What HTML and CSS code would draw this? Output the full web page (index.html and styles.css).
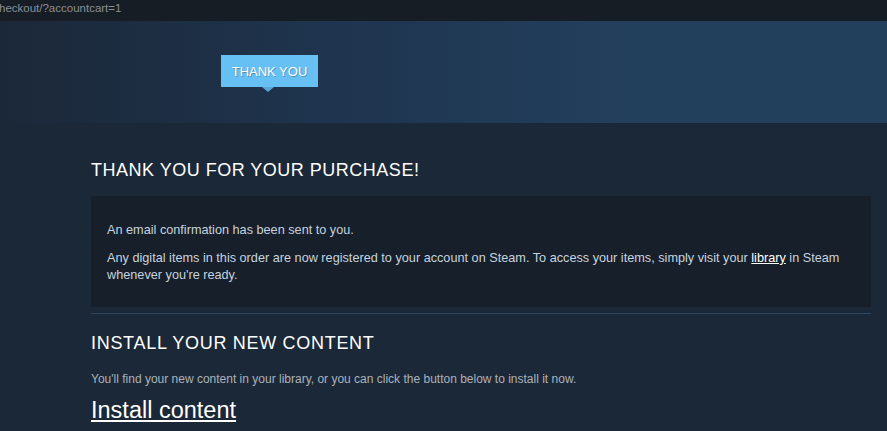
FILE: index.html
```html
<!DOCTYPE html>
<html>
<head>
<meta charset="utf-8">
<link rel="stylesheet" href="styles.css">
</head>
<body>
<div class="urlbar"><span class="url">heckout/?accountcart=1</span></div>
<div class="header">
  <div class="tag">THANK YOU</div>
</div>
<div class="content">
  <h2 class="title">THANK YOU FOR YOUR PURCHASE!</h2>
  <div class="box">
    <p>An email confirmation has been sent to you.</p>
    <p class="p2">Any digital items in this order are now registered to your account on Steam. To access your items, simply visit your <a href="#">library</a> in Steam whenever you're ready.</p>
  </div>
  <div class="rule"></div>
  <h2 class="title title2">INSTALL YOUR NEW CONTENT</h2>
  <p class="info">You'll find your new content in your library, or you can click the button below to install it now.</p>
  <a class="install" href="#">Install content</a>
</div>
</body>
</html>
```
FILE: styles.css
```css
html, body {
  margin: 0;
  padding: 0;
  background: #1b2838;
  font-family: "Liberation Sans", Arial, sans-serif;
  overflow: hidden;
}
.urlbar {
  height: 21px;
  background: #171d25;
  overflow: hidden;
}
.url {
  display: block;
  margin-left: -1px;
  padding-top: 1px;
  font-size: 11.5px;
  line-height: 14px;
  color: #8a8f96;
}
.header {
  height: 102px;
  background: linear-gradient(to right, #1b2838 0%, #1f3550 40%, #223f5c 70%, #223f5c 100%);
  position: relative;
}
.tag {
  position: absolute;
  left: 221px;
  top: 34px;
  width: 97px;
  height: 32px;
  background: #66c0f4;
  color: #fff;
  font-size: 13px;
  line-height: 33px;
  text-align: center;
  text-shadow: 1px 1px 0 rgba(0,0,0,0.25);
}
.tag::after {
  content: "";
  position: absolute;
  left: 41px;
  top: 32px;
  border-left: 6px solid transparent;
  border-right: 6px solid transparent;
  border-top: 5px solid #5aa6d8;
}
.content {
  margin-left: 91px;
  width: 780px;
}
.title {
  margin: 0;
  padding-top: 36px;
  font-weight: normal;
  font-size: 18px;
  line-height: 22px;
  letter-spacing: 0.5px;
  color: #fff;
}
.box {
  margin-top: 15px;
  background: #171f2b;
  padding: 26px 16px 23px 16px;
  color: #c6d4df;
  font-size: 12.7px;
  line-height: 17px;
}
.box p {
  margin: 0;
}
.box .p2 {
  margin-top: 11px;
}
.box a {
  color: #fff;
  text-decoration: underline;
}
.rule {
  margin-top: 6px;
  height: 1px;
  background: #2b4660;
}
.title2 {
  padding-top: 18px;
  font-size: 18px;
  letter-spacing: 0.7px;
}
.info {
  margin: 17px 0 0 0;
  color: #acb2b8;
  font-size: 12px;
  line-height: 17px;
}
.install {
  display: inline-block;
  margin-top: 9px;
  color: #fff;
  font-size: 23.5px;
  line-height: 27px;
  text-decoration: underline;
}
```
